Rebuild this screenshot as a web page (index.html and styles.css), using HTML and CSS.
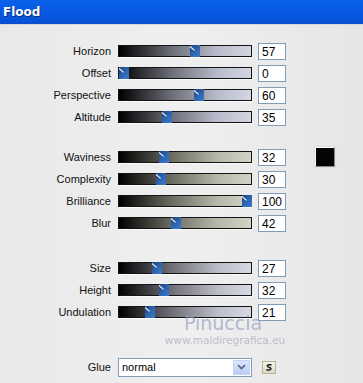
FILE: index.html
```html
<!DOCTYPE html>
<html lang="en">
  <head>
    <meta charset="UTF-8" />
    <title>Flood</title>
    <link rel="stylesheet" href="styles.css">
  </head>
  <body>
    <div class="titlebar">Flood</div>

    <div class="panel">
      <!-- first group -->
      <div class="group blue">
        <div class="row">
          <span class="label">Horizon</span>
          <div class="track"><span class="thumb" style="left: 71px"></span></div>
          <span class="value">57</span>
        </div>
        <div class="row">
          <span class="label">Offset</span>
          <div class="track"><span class="thumb" style="left: 0px"></span></div>
          <span class="value">0</span>
        </div>
        <div class="row">
          <span class="label">Perspective</span>
          <div class="track"><span class="thumb" style="left: 75px"></span></div>
          <span class="value">60</span>
        </div>
        <div class="row">
          <span class="label">Altitude</span>
          <div class="track"><span class="thumb" style="left: 43px"></span></div>
          <span class="value">35</span>
        </div>
      </div>

      <!-- second group -->
      <div class="group beige second">
        <div class="row">
          <span class="label">Waviness</span>
          <div class="track"><span class="thumb" style="left: 40px"></span></div>
          <span class="value">32</span>
          <span class="swatch"></span>
        </div>
        <div class="row">
          <span class="label">Complexity</span>
          <div class="track"><span class="thumb" style="left: 37px"></span></div>
          <span class="value">30</span>
        </div>
        <div class="row">
          <span class="label">Brilliance</span>
          <div class="track"><span class="thumb" style="left: 123px"></span></div>
          <span class="value">100</span>
        </div>
        <div class="row">
          <span class="label">Blur</span>
          <div class="track"><span class="thumb" style="left: 52px"></span></div>
          <span class="value">42</span>
        </div>
      </div>

      <!-- third group -->
      <div class="group grey third">
        <div class="row">
          <span class="label">Size</span>
          <div class="track"><span class="thumb" style="left: 33px"></span></div>
          <span class="value">27</span>
        </div>
        <div class="row">
          <span class="label">Height</span>
          <div class="track"><span class="thumb" style="left: 40px"></span></div>
          <span class="value">32</span>
        </div>
        <div class="row">
          <span class="label">Undulation</span>
          <div class="track"><span class="thumb" style="left: 26px"></span></div>
          <span class="value">21</span>
        </div>
      </div>

      <div class="row glue">
        <span class="label">Glue</span>
        <div class="dropdown">
          <span class="dropdown-text">normal</span>
          <span class="dropdown-btn">
            <svg width="9" height="6" viewBox="0 0 9 6"><path d="M1 1 L4.5 4.5 L8 1" fill="none" stroke="#4d6185" stroke-width="1.6"/></svg>
          </span>
        </div>
        <span class="small-btn">
          <svg width="8" height="7" viewBox="0 0 8 7"><path d="M6.5 1.2 C5 0.2 2 0.6 2.2 2 C2.4 3.4 6 3.2 6 4.8 C6 6.3 2.8 6.4 1.3 5.6" fill="none" stroke="#222" stroke-width="1.5"/></svg>
        </span>
      </div>

      <div class="watermark">
        <span class="wm-name">Pinuccia</span>
        <span class="wm-url">www.maidiregrafica.eu</span>
      </div>
    </div>
  </body>
</html>
```

FILE: styles.css
```css
body {
  margin: 0;
  background: #ececec;
  font-family: "Liberation Sans", Arial, sans-serif;
  font-size: 11px;
  color: #000;
}
.titlebar {
  height: 24px;
  line-height: 24px;
  padding-left: 3px;
  background: linear-gradient(#0a62ea, #0756e0 70%, #0a4fcf);
  border-bottom: 1px solid #d8d8d8;
  color: #fff;
  font-family: "DejaVu Sans", Tahoma, sans-serif;
  font-weight: bold;
  font-size: 12px;
  text-shadow: 1px 1px 0 #0a2a6a;
}
.panel {
  position: relative;
  height: 358px;
  padding-top: 15px;
  box-sizing: border-box;
  background: linear-gradient(90deg, #e9e9e9, #efefef 50%, #e6e6e6);
}
.group.second {
  margin-top: 18px;
}
.group.third {
  margin-top: 23px;
}
.row {
  display: flex;
  align-items: center;
  height: 22px;
}
.label {
  width: 118px;
  padding-right: 7px;
  box-sizing: border-box;
  text-align: right;
  color: #111;
}
.track {
  position: relative;
  width: 134px;
  height: 12px;
  box-sizing: border-box;
  border: 1px solid #141414;
  box-shadow: 0 1px 0 #fafafa;
}
.blue .track {
  background: linear-gradient(90deg, #000, #6d6f78 40%, #b9bcca 75%, #d3d6e2);
}
.beige .track {
  background: linear-gradient(90deg, #000, #6c6c62 40%, #b8b8aa 75%, #d2d3c6);
}
.grey .track {
  background: linear-gradient(90deg, #000, #707078 40%, #bbbdc8 75%, #d6d8e4);
}
.thumb {
  position: absolute;
  top: -1px;
  width: 10px;
  height: 12px;
  background: linear-gradient(135deg, #1c3f78, #2f67b4 55%, #3b78c8);
  overflow: hidden;
}
.thumb::before {
  content: "";
  position: absolute;
  left: 0;
  top: 1px;
  width: 6px;
  height: 1px;
  background: #fff;
  transform: rotate(40deg);
  transform-origin: left center;
}
.value {
  margin-left: 6px;
  width: 28px;
  height: 17px;
  line-height: 17px;
  padding-left: 3px;
  box-sizing: border-box;
  background: #fff;
  border: 1px solid #7f9db9;
  font-size: 12px;
}
.swatch {
  margin-left: 29px;
  width: 20px;
  height: 20px;
  box-sizing: border-box;
  background: #050505;
  border: 1px solid #fafafa;
  border-right-color: #8a8a8a;
  border-bottom-color: #8a8a8a;
  box-shadow: 0 0 2px #cfcfcf;
}
.row.glue {
  margin-top: 33px;
}
.dropdown {
  display: flex;
  align-items: center;
  width: 134px;
  height: 19px;
  box-sizing: border-box;
  background: #fff;
  border: 1px solid #7f9db9;
  font-size: 11px;
}
.dropdown-text {
  flex: 1;
  padding-left: 3px;
}
.dropdown-btn {
  display: flex;
  align-items: center;
  justify-content: center;
  width: 17px;
  height: 15px;
  margin-right: 1px;
  background: linear-gradient(#dbe6fb, #b9cdf3);
  border: 1px solid #c3d3f5;
  box-sizing: border-box;
}
.small-btn {
  display: flex;
  align-items: center;
  justify-content: center;
  margin-left: 10px;
  width: 12px;
  height: 11px;
  background: linear-gradient(#f4f3ea, #dcd9c6);
  border: 1px solid #b7b39c;
}
.watermark {
  position: absolute;
  left: 152px;
  top: 287px;
  display: flex;
  flex-direction: column;
  align-items: center;
  width: 146px;
  pointer-events: none;
}
.wm-name {
  padding-right: 4px;
  font-family: "DejaVu Sans", sans-serif;
  font-size: 19px;
  line-height: 22px;
  color: rgba(150, 160, 190, 0.7);
}
.wm-url {
  font-family: "DejaVu Sans", sans-serif;
  font-size: 10.5px;
  line-height: 13px;
  color: rgba(165, 170, 185, 0.7);
}
```
